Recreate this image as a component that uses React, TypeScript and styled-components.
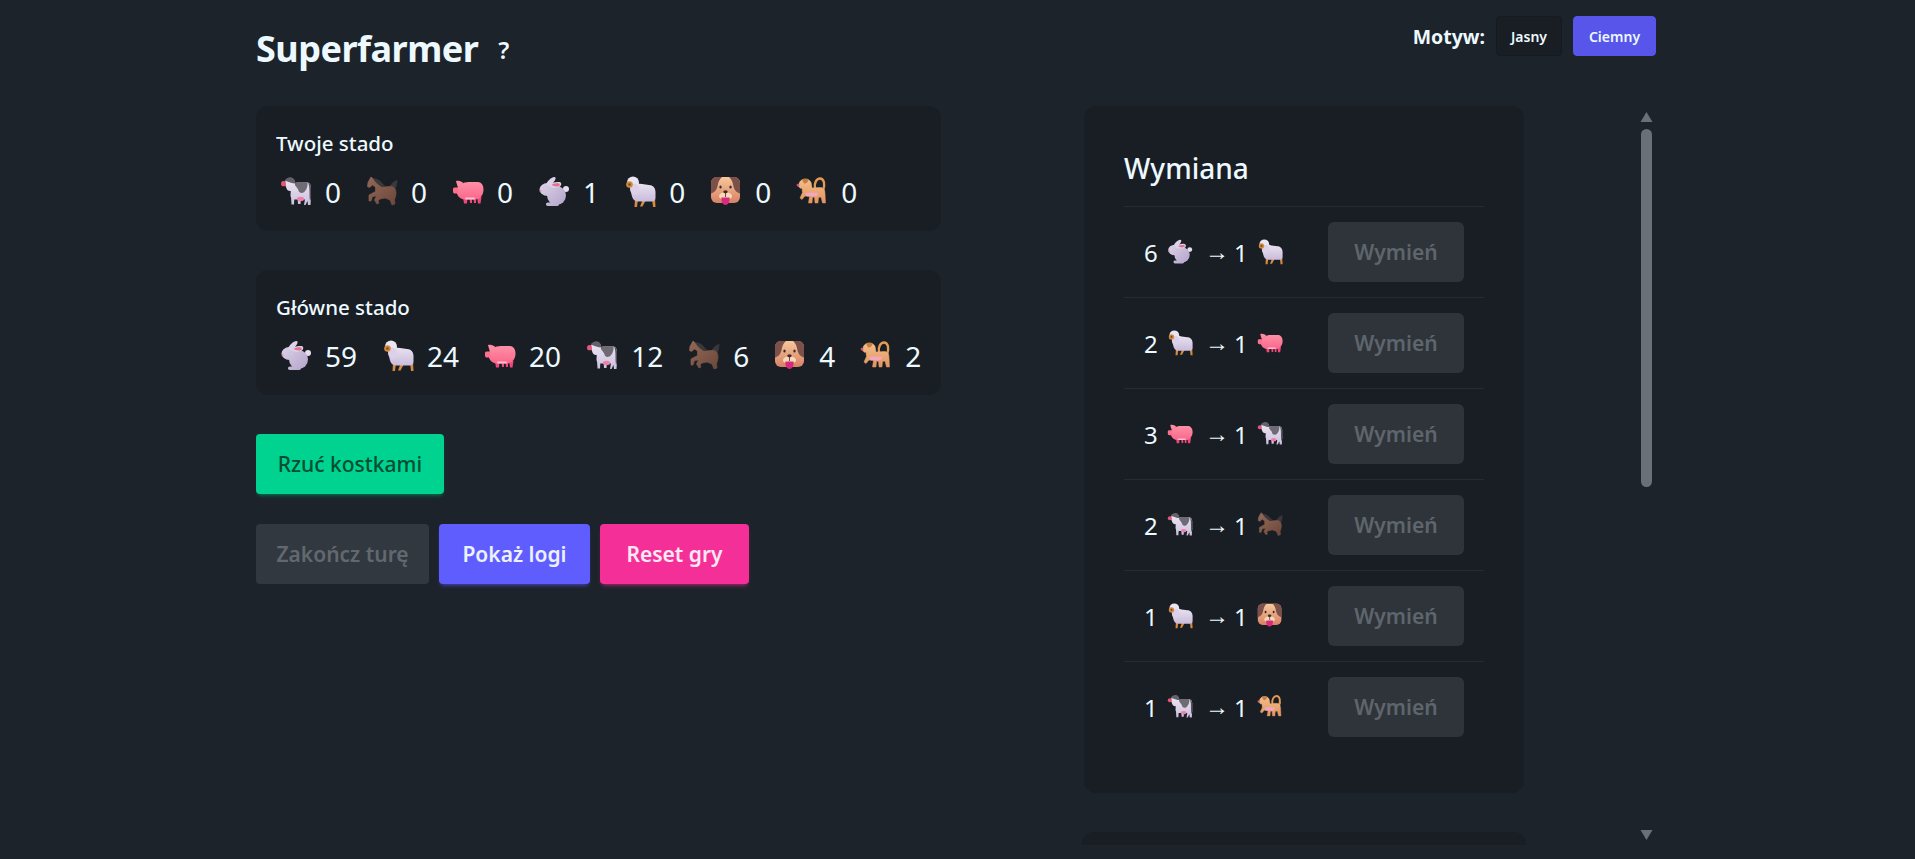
import styled, { createGlobalStyle, css } from 'styled-components';

const GlobalStyle = createGlobalStyle`
	html, body {
		margin: 0;
		height: 100%;
		overflow: hidden;
		background: #1d232a;
		color: #ecf9ff;
		font-family: 'Noto Sans', 'Open Sans', sans-serif;
	}
`;

type AnimalName = 'cow' | 'horse' | 'pig' | 'rabbit' | 'sheep' | 'bigdog' | 'smalldog';

const Gradient = ({ id, from, to, diagonal }: { id: string; from: string; to: string; diagonal?: boolean }) => (
	<defs>
		<linearGradient id={id} gradientUnits="userSpaceOnUse" x1="0" y1="0" x2={diagonal ? 32 : 0} y2="32">
			<stop offset="0" stopColor={from} />
			<stop offset="1" stopColor={to} />
		</linearGradient>
	</defs>
);

function AnimalShape({ name }: { name: AnimalName }) {
	switch (name) {
		case 'cow':
			return (
				<>
					<Gradient id="cowHide" from="#f1ebf6" to="#c8bbdb" />
					<path d="M11 20h3.5l-.5 8.5h-2.5zM17.5 21H21l-.5 7H18zM25.5 20H31l-.5 9h-2.500l-.5-4-2 4h-1.500z" fill="url(#cowHide)" />
					<path d="M11 9c3-2 6-2.500 9-2.500h7c2.500 0 4 2 4 5V21c0 1.500-1.500 2.500-3 2.500H14c-2 0-3.500-2-3.500-4z" fill="url(#cowHide)" />
					<path d="M14 6.800c4-.6 9-.6 13.500-.3.500 3.500-1 8-4 10-2.500 1.200-4.500 0-5-2-.5-2.500-3.500-4-4.500-7.700z" fill="#6e6b75" />
					<path d="M28 6.800c2 .7 3 2.500 3 5V22c0 1-.3 2-1 2.500-.6-3-.4-8-.6-11.500-.1-2.500-.5-4.500-1.400-6.200z" fill="#55525b" />
					<ellipse cx="20.500" cy="23" rx="3.500" ry="2.200" fill="#ee7fa6" />
					<path d="M4.500 7c1-3 3-5 6-5s4.500 2.500 4.500 5.500c0 3.500-1.500 7-4.500 7.500-2.500.2-4-1.500-4.500-4z" fill="url(#cowHide)" />
					<path d="M4.500 4.500C6 2.500 8.500 1 11 1.300c2.700.5 4.200 3 4.200 6.200-3-.2-7-1.500-10.700-3z" fill="#64616b" />
					<ellipse cx="3.500" cy="7.700" rx="2.500" ry="2.600" fill="#e5587a" />
				</>
			);
		case 'horse':
			return (
				<>
					<Gradient id="horseCoat" from="#946a58" to="#684539" diagonal />
					<path d="M24 11c1-3 3.500-5.500 7-6.500-.3 1.500 0 2.500-.5 4-.5 2-1 3.500-2 5l-3-1z" fill="#3b383c" stroke="#3b383c" strokeLinejoin="round" />
					<path d="M5 1l3 2.500c3 2.500 5 5.500 8 7.500l8-.5c4-.5 6 2.500 6 6.500 0 3-1 5-1.500 7l.5 4-3 1-2-5-5-2-5 1-2 2 1 2-2 1-2.500-4 2-4-4 .5L5 25H3v-6l6.500-3.500V11l-3-2-3 2.500-2-1 .5-4z" fill="url(#horseCoat)" stroke="url(#horseCoat)" strokeWidth=".7" strokeLinejoin="round" />
					<path d="M7 2.500c3-.8 7 1.500 9.500 5 1 1.200 2 2 3 2.800l-3.500.7C12 9 9 6 7 2.500z" fill="#3b383c" />
				</>
			);
		case 'pig':
			return (
				<>
					<Gradient id="pigSkin" from="#ff9fb0" to="#f9527d" />
					<path d="M11 21h4.500l-.5 6.500h-3zM17.500 22h2.500v5h-2zM21.500 22H24v5h-2zM25 21h4.500l-1 6.500h-2.500z" fill="#f0467a" />
					<path d="M5 13c1-4 6-7 12-7h9c3 0 5.500 3 5.500 7.500 0 5-3 10-8.500 10H13c-4 0-7-2.500-8-6z" fill="url(#pigSkin)" />
					<path d="M4 5c3-1 5.500.2 7.500 2L6 11.500C5 9 4.500 7 4 5z" fill="#ff8ba0" />
					<path d="M1 13c0-1 .8-1.500 2-1.500h3v6H3c-1.200 0-2-.8-2-1.800z" fill="#ff6f8e" />
					<rect x="13" y="21.500" width="10" height="2" rx="1" fill="#fdc0cf" />
				</>
			);
		case 'rabbit':
			return (
				<>
					<Gradient id="rabbitFur" from="#e4dbef" to="#ad9dc4" diagonal />
					<circle cx="28" cy="13" r="3" fill="#e6ddef" />
					<ellipse cx="18.500" cy="19.500" rx="9.500" ry="9.500" fill="url(#rabbitFur)" />
					<rect x="8" y="26.500" width="13" height="3.500" rx="1.700" fill="url(#rabbitFur)" />
					<ellipse cx="9.500" cy="13.500" rx="8" ry="6.500" fill="url(#rabbitFur)" />
					<path d="M8 9c1-3.500 4.500-7.500 8.500-8 1.500 0 1.300 2 .3 3.500L13 10z" fill="#dcd2e9" />
					<path d="M11 10c2-3.500 6.500-4.500 10.500-4 2.500.4 2.300 4-.5 5-3.500 1.200-7 1-10-1z" fill="#dcd2e9" />
					<path d="M13.500 9c2-1.500 5-2 7.500-1.500 1.200.3 1 2 0 2.400-2.500 1-5 .6-7.500-.9z" fill="#e6708a" />
					<circle cx="2.500" cy="15" r="1" fill="#d98fa6" />
				</>
			);
		case 'sheep':
			return (
				<>
					<Gradient id="sheepWool" from="#f6f1f9" to="#bdaed4" />
					<path d="M11 23h3l-1 8h-2.500zM18.500 24H22l-3.500 6.500H16zM28 22h3l.5 9H29z" fill="#d68a3e" />
					<path d="M7 12c1-5 6-5 11-4l7 1c4 0 6.500 3 6.500 7v6c0 3-3 4-6 3.500H14c-5 0-7-5-7-13.500z" fill="url(#sheepWool)" />
					<ellipse cx="9" cy="6.500" rx="6" ry="6" fill="#ebe4f2" />
					<ellipse cx="10.500" cy="13" rx="4.500" ry="5.500" fill="#dcd1e8" />
					<circle cx="5.500" cy="8.500" r="3.300" fill="#d08b3f" />
					<circle cx="5.500" cy="8.500" r="1.300" fill="#7d4e22" />
				</>
			);
		case 'bigdog':
			return (
				<>
					<Gradient id="dogFace" from="#f7cb9d" to="#d2735a" />
					<rect x="1" y="1" width="29" height="26" rx="6" fill="url(#dogFace)" />
					<path d="M7 1h5c-2.500 2-3.800 5-4.300 8.500C7.200 13 5 16.500 1 17.500V7c0-3.500 2.500-6 6-6zM24 1h-5c2.500 2 3.800 5 4.300 8.500.5 3.500 2.700 7 6.700 8V7c0-3.500-2.500-6-6-6z" fill="#7c5149" />
					<ellipse cx="10.500" cy="11" rx="1.200" ry="1.500" fill="#3c2a2a" />
					<ellipse cx="20.500" cy="11" rx="1.200" ry="1.500" fill="#3c2a2a" />
					<path d="M9 20c1-5 12-5 13 0 0 2-2 3.500-6.500 3.500S9 22 9 20z" fill="#f8d8b6" />
					<ellipse cx="15.500" cy="15.700" rx="2.200" ry="1.500" fill="#3c2a2a" />
					<path d="M15.500 16.500v4.500" stroke="#3c2a2a" strokeWidth=".8" />
					<path d="M11.500 21.500h8c.7 3-1 7.500-4 7.500s-4.700-4.500-4-7.500z" fill="#d9287f" />
				</>
			);
		case 'smalldog':
			return (
				<>
					<Gradient id="dogCoat" from="#f6c490" to="#dd8a55" />
					<path d="M19 12c-1-5 1.500-9.500 5-9.500 4 0 5.500 6 3 12.500" fill="none" stroke="#e39a52" strokeWidth="2.400" strokeLinecap="round" />
					<path d="M3 8c.5-3 3-5 6.500-5 3.500 0 6 2.500 6 6l.5 3 8-.5c3.500 0 5 2.500 5 6l.5 9.500h-3l-1.500-6-2.500.5-.5 5.500H19l-.5-6-2 .5-.5 5.500h-3.500l1-6.500-4.500-.5-3 3.500-2-1.500 2.500-5.500-.5-4.500C4 13 3.500 11.500 3 10.500L1.500 10z" fill="url(#dogCoat)" stroke="url(#dogCoat)" strokeWidth=".5" strokeLinejoin="round" />
					<path d="M9.500 17c4-.8 8-.8 12.500 0 .3 1.500-.7 3-2 3.200h-9c-1-.4-1.500-2-1.500-3.200z" fill="#f3a6c0" />
					<path d="M6 3.500c2-1 5-1 6.500.5-.5 2-2.500 4-4.500 3.500z" fill="#c77c42" />
					<ellipse cx="2" cy="9" rx="1.400" ry="1.200" fill="#d94f7a" />
				</>
			);
	}
}

function Animal({ name, size }: { name: AnimalName; size: number }) {
	return (
		<svg width={size} height={size} viewBox="0 0 32 32" aria-label={name}>
			<AnimalShape name={name} />
		</svg>
	);
}

const playerHerd: [AnimalName, number][] = [
	['cow', 0],
	['horse', 0],
	['pig', 0],
	['rabbit', 1],
	['sheep', 0],
	['bigdog', 0],
	['smalldog', 0],
];

const mainHerd: [AnimalName, number][] = [
	['rabbit', 59],
	['sheep', 24],
	['pig', 20],
	['cow', 12],
	['horse', 6],
	['bigdog', 4],
	['smalldog', 2],
];

const trades: [number, AnimalName, AnimalName][] = [
	[6, 'rabbit', 'sheep'],
	[2, 'sheep', 'pig'],
	[3, 'pig', 'cow'],
	[2, 'cow', 'horse'],
	[1, 'sheep', 'bigdog'],
	[1, 'cow', 'smalldog'],
];

function Herd({ title, herd }: { title: string; herd: [AnimalName, number][] }) {
	return (
		<HerdCard>
			<HerdTitle>{title}</HerdTitle>
			<HerdRow>
				{herd.map(([name, count]) => (
					<HerdItem key={name}>
						<Animal name={name} size={32} />
						<span>{count}</span>
					</HerdItem>
				))}
			</HerdRow>
		</HerdCard>
	);
}

export default function App() {
	return (
		<Page>
			<GlobalStyle />
			<Header>
				<TitleRow>
					<Title>Superfarmer</Title>
					<HelpMark>?</HelpMark>
				</TitleRow>
				<ThemeRow>
					<ThemeLabel>Motyw:</ThemeLabel>
					<ThemeButton>Jasny</ThemeButton>
					<ThemeButton $active>Ciemny</ThemeButton>
				</ThemeRow>
			</Header>
			<ScrollArea>
				<Scroller>
					<LeftColumn>
						<Herd title="Twoje stado" herd={playerHerd} />
						<Herd title="Główne stado" herd={mainHerd} />
						<ActionRow>
							<ActionButton $variant="success">Rzuć kostkami</ActionButton>
						</ActionRow>
						<ActionRow>
							<ActionButton $variant="disabled">Zakończ turę</ActionButton>
							<ActionButton $variant="primary">Pokaż logi</ActionButton>
							<ActionButton $variant="secondary">Reset gry</ActionButton>
						</ActionRow>
					</LeftColumn>
					<RightColumn>
						<TradeCard>
							<TradeTitle>Wymiana</TradeTitle>
							{trades.map(([count, from, to], i) => (
								<TradeRow key={i}>
									<TradeText>
										<Amount>{count}</Amount>
										<Animal name={from} size={26} />
										<Arrow>→</Arrow>
										<Amount>1</Amount>
										<Animal name={to} size={26} />
									</TradeText>
									<TradeButton>Wymień</TradeButton>
								</TradeRow>
							))}
						</TradeCard>
						<NextCard />
					</RightColumn>
				</Scroller>
				<ScrollBar>
					<svg width="13" height="10" viewBox="0 0 13 10">
						<path d="M6.500 0l6 10H.5z" fill="#6a7077" />
					</svg>
					<ScrollThumb />
					<ScrollEndArrow width="13" height="10" viewBox="0 0 13 10">
						<path d="M6.500 10l6-10H.5z" fill="#6a7077" />
					</ScrollEndArrow>
				</ScrollBar>
			</ScrollArea>
		</Page>
	);
}

const Page = styled.div`
	width: 1400px;
	margin-left: 256px;
`;

const Header = styled.header`
	height: 106px;
	display: flex;
	justify-content: space-between;
	align-items: flex-start;
`;

const TitleRow = styled.div`
	display: flex;
	align-items: center;
	gap: 20px;
	padding-top: 24px;
`;

const Title = styled.h1`
	margin: 0;
	font-size: 36px;
	line-height: 50px;
	font-weight: 700;
	letter-spacing: -0.5px;
`;

const HelpMark = styled.span`
	font-size: 24px;
	font-weight: 600;
`;

const ThemeRow = styled.div`
	display: flex;
	align-items: center;
	padding-top: 16px;
`;

const ThemeLabel = styled.span`
	font-size: 19.5px;
	font-weight: 700;
	margin-right: 11px;
`;

const ThemeButton = styled.button<{ $active?: boolean }>`
	height: 40px;
	width: ${p => (p.$active ? '83px' : '66px')};
	margin-left: ${p => (p.$active ? '11px' : '0')};
	padding: 0;
	border-radius: 4px;
	font: 600 14px 'Noto Sans', sans-serif;
	color: #ecf9ff;
	border: 1px solid ${p => (p.$active ? '#5855eb' : '#161a20')};
	background: ${p => (p.$active ? '#5855eb' : '#191e24')};
`;

const ScrollArea = styled.div`
	position: relative;
`;

const Scroller = styled.main`
	height: 739px;
	display: flex;
	align-items: flex-start;
	overflow: hidden;
`;

const ScrollBar = styled.div`
	position: absolute;
	top: 0;
	bottom: 0;
	right: 2px;
	width: 15px;
	padding: 6px 0 5px;
	box-sizing: border-box;
	display: flex;
	flex-direction: column;
	align-items: center;
`;

const ScrollThumb = styled.div`
	width: 11px;
	height: 358px;
	margin-top: 7px;
	border-radius: 6px;
	background: #6a7077;
`;

const ScrollEndArrow = styled.svg`
	margin-top: auto;
`;

const LeftColumn = styled.div`
	width: 685px;
	flex: none;
`;

const HerdCard = styled.section`
	height: 125px;
	box-sizing: border-box;
	margin-bottom: 39px;
	padding: 23px 20px 0;
	border-radius: 12px;
	background: #191e24;
`;

const HerdTitle = styled.h2`
	margin: 0;
	font-size: 20.5px;
	line-height: 28px;
	font-weight: 500;
`;

const HerdRow = styled.div`
	display: flex;
	gap: 25px;
	padding: 16px 0 0 4px;
`;

const HerdItem = styled.div`
	display: flex;
	align-items: center;
	gap: 13px;
	font-size: 28px;
	line-height: 38px;
`;

const ActionRow = styled.div`
	display: flex;
	gap: 10px;
	margin-bottom: 30px;
`;

const variantStyles = {
	success: css`
		width: 188px;
		background: #00d390;
		color: #004e33;
		font-weight: 500;
		box-shadow: 0 3px 4px -2px #00805a;
	`,
	disabled: css`
		width: 173px;
		background: #32383f;
		color: #62686f;
		font-weight: 600;
	`,
	primary: css`
		width: 151px;
		background: #605dff;
		color: #edf1fe;
		font-weight: 600;
		box-shadow: 0 3px 4px -2px #4a48c8;
	`,
	secondary: css`
		width: 149px;
		background: #f43098;
		color: #fde8f3;
		font-weight: 600;
		box-shadow: 0 3px 4px -2px #b8267a;
	`,
};

const ActionButton = styled.button<{ $variant: keyof typeof variantStyles }>`
	height: 60px;
	padding: 0;
	border: 0;
	border-radius: 4px;
	font-family: 'Noto Sans', sans-serif;
	font-size: 21px;
	${p => variantStyles[p.$variant]}
`;

const RightColumn = styled.div`
	width: 444px;
	margin-left: 141px;
	flex: none;
`;

const TradeCard = styled.section`
	width: 440px;
	height: 687px;
	box-sizing: border-box;
	margin: 0 2px 39px;
	padding: 40px 40px 0;
	border-radius: 12px;
	background: #191e24;
`;

const TradeTitle = styled.h2`
	margin: 0;
	height: 60px;
	font-size: 28px;
	line-height: 44px;
	font-weight: 500;
`;

const TradeRow = styled.div`
	height: 91px;
	box-sizing: border-box;
	padding: 15px 20px;
	display: flex;
	align-items: center;
	justify-content: space-between;
	border-top: 1px solid #272c33;
`;

const TradeText = styled.div`
	display: flex;
	align-items: center;
	font-size: 24px;
`;

const Amount = styled.span`
	width: 23px;
`;

const Arrow = styled.span`
	width: 29px;
	margin-left: 12px;
	font-family: 'Liberation Sans', sans-serif;
	font-size: 24px;
`;

const TradeButton = styled.button`
	width: 136px;
	height: 60px;
	padding: 0;
	border: 0;
	border-radius: 6px;
	background: #2e343a;
	color: #5f656c;
	font: 600 21px 'Noto Sans', sans-serif;
`;

/* Only its top edge shows above the fold; the rest is cut off by the scroller. */
const NextCard = styled.section`
	height: 719px;
	border-radius: 12px;
	background: #191e24;
`;
